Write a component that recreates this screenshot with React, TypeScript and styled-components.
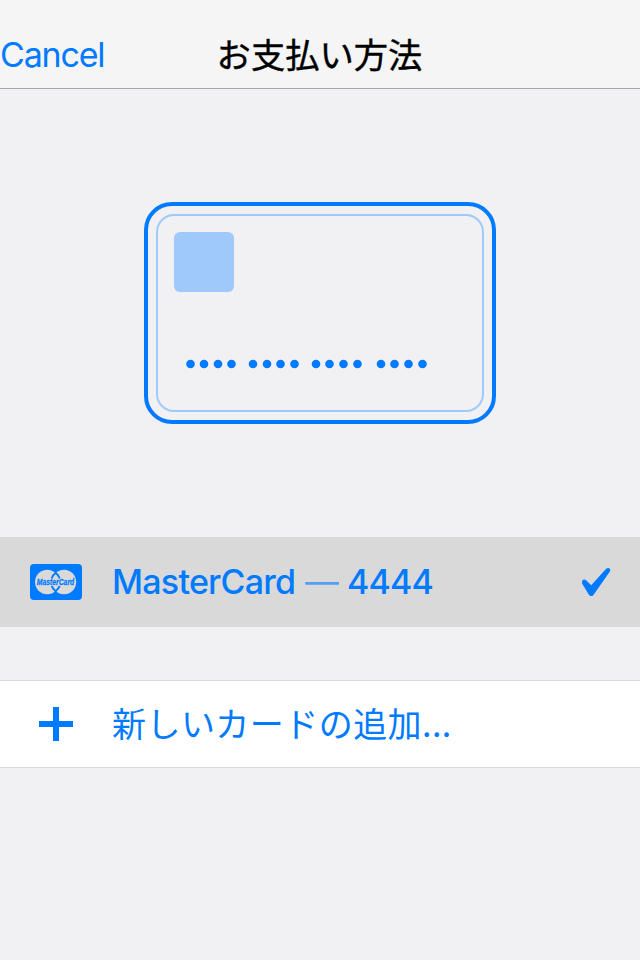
import React from "react";
import styled, { createGlobalStyle } from "styled-components";

const BLUE = "#007aff";
const PALE_BLUE = "#a0c9fb";

const GlobalStyle = createGlobalStyle`
  * { box-sizing: border-box; }
  body { margin: 0; background: #f1f1f4; }
`;

const Screen = styled.main`
  display: flex;
  flex-direction: column;
  width: 640px;
  height: 960px;
  overflow: hidden;
  background: #f1f1f4;
  color: ${BLUE};
  font-family: Inter, "Noto Sans CJK JP", sans-serif;
  font-size: 34px;
`;

const NavBar = styled.header`
  display: grid;
  grid-template-columns: 200px 240px 200px;
  align-items: center;
  height: 89px;
  padding-top: 20px;
  background: #f5f5f5;
  border-bottom: 1px solid #a5a5a7;
`;

const CancelButton = styled.button`
  justify-self: start;
  padding: 1px 0 0;
  border: 0;
  background: none;
  color: inherit;
  font: 400 34px/40px Inter, sans-serif;
  letter-spacing: -1.2px;
`;

const Title = styled.h1`
  margin: 0;
  padding: 0 1px 3px 0;
  color: #000;
  text-align: center;
  font: 400 34.3px/40px "Noto Sans CJK JP", sans-serif;
  -webkit-text-stroke: 0.4px #000;
  white-space: nowrap;
`;

const Preview = styled.section`
  display: flex;
  justify-content: center;
  height: 448px;
  padding-top: 113px;
`;

const Card = styled.div`
  width: 352px;
  height: 222px;
  padding: 8px;
  border: 4px solid ${BLUE};
  border-radius: 28px;
`;

const CardFace = styled.div`
  display: flex;
  flex-direction: column;
  justify-content: space-between;
  height: 100%;
  padding: 16px 16px 41px;
  border: 2px solid ${PALE_BLUE};
  border-radius: 18px;
`;

const Chip = styled.div`
  width: 60px;
  height: 60px;
  border-radius: 6px;
  background: ${PALE_BLUE};
`;

const NumberDots = styled.svg`
  display: block;
  width: 260px;
  height: 10px;
`;

const Row = styled.div<{ $selected?: boolean }>`
  display: grid;
  grid-template-columns: 112px 1fr 58px;
  align-items: center;
  height: ${({ $selected }) => ($selected ? "90px" : "88px")};
  background: ${({ $selected }) => ($selected ? "#d9d9d9" : "#fff")};
  border: solid #d9d9dc;
  border-width: ${({ $selected }) => ($selected ? "0" : "1px 0")};
  & + & { margin-top: 53px; }
`;

const BrandIcon = styled.svg`
  width: 52px;
  height: 36px;
  margin-left: 30px;
`;

const PlusIcon = styled.svg`
  width: 34px;
  height: 34px;
  margin-left: 39px;
`;

const CheckIcon = styled.svg`
  width: 30px;
  height: 30px;
`;

const CardLabel = styled.div`
  display: flex;
  align-items: center;
  font-weight: 500;
  line-height: 40px;
  white-space: nowrap;
`;

const Brand = styled.span`
  width: 193px;
  letter-spacing: -0.75px;
`;

const Dash = styled.span`
  width: 43px;
  font-weight: 400;
  opacity: 0.6;
`;

const Digits = styled.span`
  margin-left: -1px;
  letter-spacing: -0.8px;
`;

const AddLabel = styled.div`
  padding-bottom: 2px;
  font: 400 34px/40px "Noto Sans CJK JP", sans-serif;
  letter-spacing: 0.45px;
  white-space: nowrap;
`;

const dotCenters = [
  16.5, 30, 44, 57.5, 79, 93, 106.5, 120.5, 142, 155.5, 169.5, 183.5, 207,
  220.5, 234.5, 248.5,
];

export default function App() {
  return (
    <>
      <GlobalStyle />
      <Screen>
        <NavBar>
          <CancelButton>Cancel</CancelButton>
          <Title>お支払い方法</Title>
        </NavBar>
        <Preview>
          <Card>
            <CardFace>
              <Chip />
              <NumberDots viewBox="0 0 260 10" fill={BLUE}>
                {dotCenters.map((x) => (
                  <circle key={x} cx={x} cy="5" r="4.3" />
                ))}
              </NumberDots>
            </CardFace>
          </Card>
        </Preview>
        <Row $selected>
          <BrandIcon viewBox="0 0 52 36">
            <rect width="52" height="36" rx="4" fill={BLUE} />
            <g fill="#d9d9d9">
              <circle cx="17.2" cy="18" r="12.2" />
              <circle cx="34" cy="18" r="12.2" />
            </g>
            <g fill="none" stroke={BLUE} strokeWidth="1.8">
              <path d="M21.6 14.5Q23 11 25.6 8.8Q28.2 11 29.8 14.5" />
              <path d="M21.6 22Q23 25 25.6 27.2Q28.2 25 29.8 22" />
            </g>
            <text
              x="6.8"
              y="16.8"
              transform="scale(1 1.25)"
              textLength="37.4"
              lengthAdjust="spacingAndGlyphs"
              fill={BLUE}
              stroke={BLUE}
              strokeWidth="0.2"
              fontFamily="Liberation Sans, sans-serif"
              fontSize="7"
              fontWeight="700"
              fontStyle="italic"
            >
              MasterCard
            </text>
          </BrandIcon>
          <CardLabel>
            <Brand>MasterCard</Brand>
            <Dash>—</Dash>
            <Digits>4444</Digits>
          </CardLabel>
          <CheckIcon viewBox="0 0 30 30" fill={BLUE}>
            <path d="M0 15.2C0 12.2 2.6 11.8 4.4 13.6L9.2 18.2L24.4 1.6C26.2-.2 29.5 1.6 27.9 4.5L11.8 27.6C10.5 29.6 8.1 29.5 6.9 27.8L.5 17.3Q0 16.4 0 15.2Z" />
          </CheckIcon>
        </Row>
        <Row>
          <PlusIcon viewBox="0 0 34 34" fill={BLUE}>
            <path d="M14 0h6v14h14v6H20v14h-6V20H0v-6h14z" />
          </PlusIcon>
          <AddLabel>新しいカードの追加...</AddLabel>
        </Row>
      </Screen>
    </>
  );
}
